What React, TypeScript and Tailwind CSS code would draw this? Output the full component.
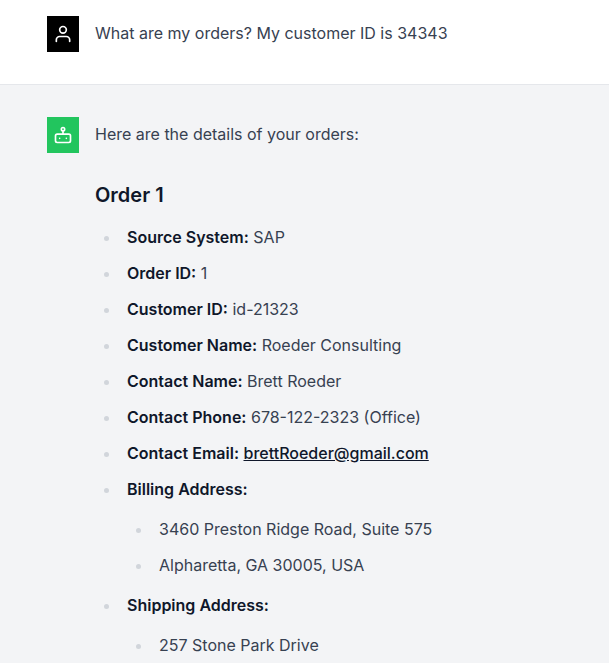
import React from "react";

const fields: [string, string][] = [
  ["Source System:", "SAP"],
  ["Order ID:", "1"],
  ["Customer ID:", "id-21323"],
  ["Customer Name:", "Roeder Consulting"],
  ["Contact Name:", "Brett Roeder"],
  ["Contact Phone:", "678-122-2323 (Office)"],
];

const listClass = "list-disc pl-[26px] marker:text-[#d1d5db]";
const itemClass = "my-2 pl-1.5";

function Label({ children }: { children: React.ReactNode }) {
  return <strong className="font-semibold text-[#0f172a]">{children}</strong>;
}

export default function App() {
  return (
    <div className="h-[663px] overflow-hidden bg-[#f3f4f6] font-['Inter',sans-serif] text-base leading-7 text-[#374151]">
      <section className="flex h-[85px] items-start gap-4 border-b border-[#e5e7eb] bg-white pl-[47px] pt-4">
        <div className="flex h-9 w-8 items-center justify-center bg-black text-white">
          <svg className="h-5 w-5" viewBox="0 0 24 24" fill="none" stroke="currentColor" strokeWidth="2" strokeLinecap="round" strokeLinejoin="round">
            <circle cx="12" cy="7" r="4" />
            <path d="M20 21v-2a4 4 0 0 0-4-4H8a4 4 0 0 0-4 4v2" />
          </svg>
        </div>
        <p className="pt-[3px]">What are my orders? My customer ID is 34343</p>
      </section>
      <section className="flex items-start gap-4 pl-[47px] pt-8">
        <div className="flex h-9 w-8 items-center justify-center bg-[#22c55e] text-white">
          <svg className="h-5 w-5" viewBox="0 0 24 24" fill="none" stroke="currentColor" strokeWidth="2" strokeLinecap="round" strokeLinejoin="round">
            <rect x="3" y="11" width="18" height="10" rx="2" />
            <circle cx="12" cy="5" r="2" />
            <path d="M12 7v4M8 16h.01M16 16h.01" />
          </svg>
        </div>
        <div className="pt-[3px]">
          <p>Here are the details of your orders:</p>
          <h3 className="mb-3 mt-[31px] text-xl font-semibold leading-8 text-[#0f172a]">Order 1</h3>
          <ul className={listClass}>
            {fields.map(([label, value]) => (
              <li key={label} className={itemClass}>
                <Label>{label}</Label> {value}
              </li>
            ))}
            <li className={itemClass}>
              <Label>Contact Email:</Label>{" "}
              <a className="font-medium text-[#0f172a] underline">brettRoeder@gmail.com</a>
            </li>
            <li className={itemClass}>
              <Label>Billing Address:</Label>
              <ul className={`my-3 ${listClass}`}>
                <li className={itemClass}>3460 Preston Ridge Road, Suite 575</li>
                <li className={itemClass}>Alpharetta, GA 30005, USA</li>
              </ul>
            </li>
            <li className={itemClass}>
              <Label>Shipping Address:</Label>
              <ul className={`my-3 ${listClass}`}>
                <li className={itemClass}>257 Stone Park Drive</li>
              </ul>
            </li>
          </ul>
        </div>
      </section>
    </div>
  );
}
